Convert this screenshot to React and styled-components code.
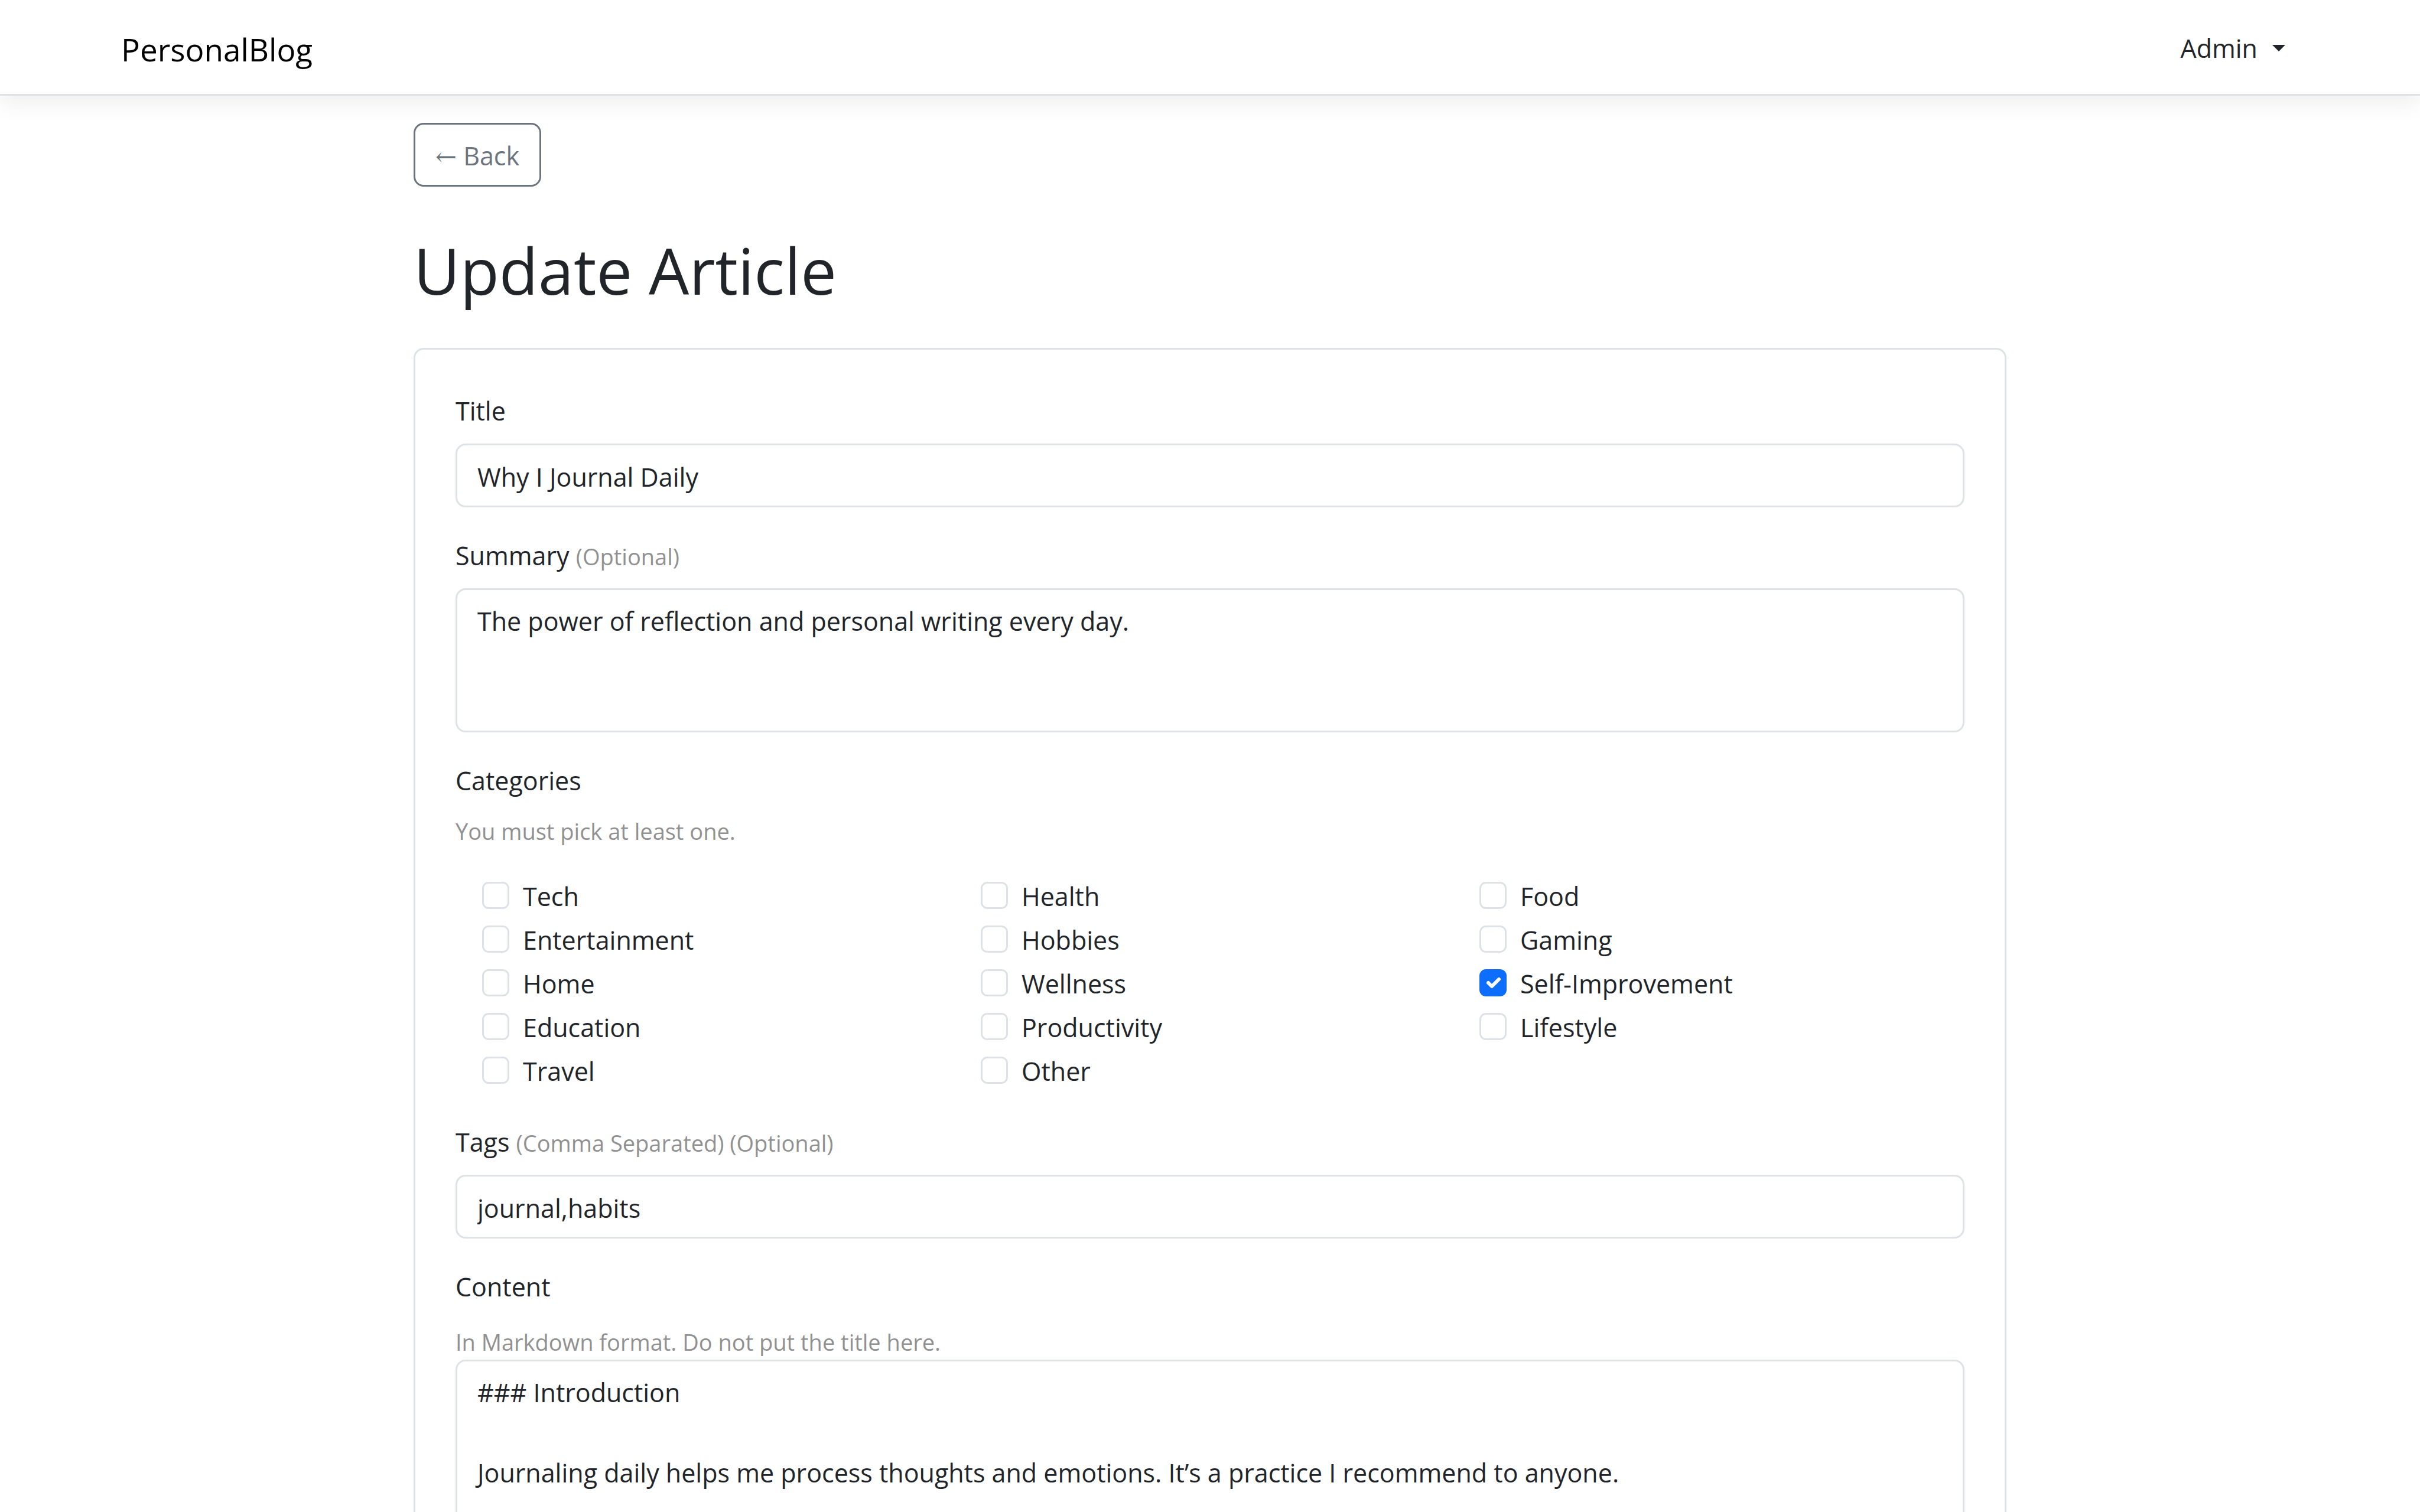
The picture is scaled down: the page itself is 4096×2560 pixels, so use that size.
import React from 'react';
import styled, { createGlobalStyle } from 'styled-components';

const ink = '#212529';
const line = '#dee2e6';
const muted = '#919191';

const GlobalStyle = createGlobalStyle`
  *, *::before, *::after { box-sizing: border-box; }
  html { scrollbar-width: none; }
  body {
    margin: 0;
    background: #fff;
    color: ${ink};
    font-family: 'Open Sans', 'Noto Sans', sans-serif;
    font-size: 43px;
    line-height: 72px;
  }
  input, textarea, button { font: inherit; color: inherit; }
`;

const Navbar = styled.header`
  border-bottom: 3px solid ${line};
  box-shadow: 0 12px 36px rgba(0, 0, 0, 0.07);
`;

const NavInner = styled.nav`
  display: flex;
  align-items: center;
  justify-content: space-between;
  height: 159px;
  max-width: 3754px;
  margin: 0 auto;
  padding: 0 34px;
`;

const Brand = styled.a`
  padding-top: 8px;
  color: #000;
  font-size: 53px;
  text-decoration: none;
`;

const UserMenu = styled.button`
  display: flex;
  align-items: center;
  gap: 25px;
  padding: 4px 23px 0;
  border: 0;
  background: none;
`;

const Caret = styled.span`
  border: 11px solid transparent;
  border-top-color: currentColor;
  border-bottom-width: 0;
`;

const Page = styled.main`
  max-width: 2696px;
  margin: 0 auto;
  padding-top: 46px;
`;

const BackButton = styled.button`
  display: block;
  height: 108px;
  padding: 4px 34px 0;
  border: 3px solid #6c757d;
  border-radius: 17px;
  background: #fff;
  color: #6c757d;
  line-height: 68px;
`;

const Arrow = styled.span`
  font-family: 'DejaVu Serif', serif;
  line-height: 1;
`;

const Heading = styled.h1`
  margin: 73px 0 63px;
  font-size: 108px;
  font-weight: 400;
  line-height: 137px;
`;

const Card = styled.form`
  display: flex;
  flex-direction: column;
  gap: 46px;
  padding: 68px;
  border: 3px solid ${line};
  border-radius: 17px;
`;

const Field = styled.div`
  display: flex;
  flex-direction: column;
`;

const Label = styled.label`
  margin-bottom: 19px;
`;

const Note = styled.span`
  color: ${muted};
  font-size: 38px;
  line-height: 1;
`;

const Hint = styled.p`
  margin: 0;
  padding-top: ${(p) => (p.$spaced ? 0 : 8)}px;
  padding-bottom: ${(p) => (p.$spaced ? 45 : 0)}px;
  color: ${muted};
  font-size: 38px;
  line-height: 60px;
`;

const Group = styled.fieldset`
  min-width: 0;
  margin: 0;
  padding: 0;
  border: 0;
`;

const Legend = styled.legend`
  margin-bottom: 19px;
  padding: 0;
`;

const TextInput = styled.input`
  width: 100%;
  height: 108px;
  padding: 4px 34px 0;
  border: 3px solid ${line};
  border-radius: 17px;
  background: #fff;
  outline: 0;
`;

const TextArea = styled.textarea`
  display: block;
  width: 100%;
  height: ${(p) => p.$height}px;
  padding: 19px 34px 15px;
  border: 3px solid ${line};
  border-radius: 17px;
  background: #fff;
  line-height: 68px;
  outline: 0;
  resize: none;
  overflow: hidden;
`;

const Options = styled.div`
  display: grid;
  grid-template-columns: repeat(3, 1fr);
  margin: 0 -23px 0 45px;
`;

const Option = styled.label`
  display: flex;
  align-items: flex-start;
  gap: 23px;
  height: 74px;
`;

const Box = styled.span`
  display: grid;
  margin-top: 11px;
`;

const Tick = styled.input`
  grid-area: 1 / 1;
  appearance: none;
  width: 46px;
  height: 46px;
  margin: 0;
  border: 3px solid ${line};
  border-radius: 11px;
  background: #fff;

  &:checked {
    border-color: #0d6efd;
    background: #0d6efd;
  }
  & + svg { visibility: hidden; }
  &:checked + svg { visibility: visible; }
`;

const TickMark = styled.svg`
  grid-area: 1 / 1;
  width: 40px;
  height: 40px;
  margin: 3px;
  pointer-events: none;
`;

const categories = [
  'Tech', 'Health', 'Food',
  'Entertainment', 'Hobbies', 'Gaming',
  'Home', 'Wellness', 'Self-Improvement',
  'Education', 'Productivity', 'Lifestyle',
  'Travel', 'Other',
];

const content = `### Introduction

Journaling daily helps me process thoughts and emotions. It’s a practice I recommend to anyone.`;

function Category({ name }) {
  return (
    <Option>
      <Box>
        <Tick type="checkbox" name="categories" value={name} defaultChecked={name === 'Self-Improvement'} />
        <TickMark viewBox="0 0 20 20" aria-hidden="true">
          <path fill="none" stroke="#fff" strokeLinecap="round" strokeLinejoin="round" strokeWidth="3" d="m6 10 3 3 6-6" />
        </TickMark>
      </Box>
      {name}
    </Option>
  );
}

export default function App() {
  return (
    <>
      <GlobalStyle />
      <Navbar>
        <NavInner>
          <Brand href="#">PersonalBlog</Brand>
          <UserMenu type="button" aria-haspopup="menu">
            Admin
            <Caret />
          </UserMenu>
        </NavInner>
      </Navbar>
      <Page>
        <BackButton type="button"><Arrow>←</Arrow> Back</BackButton>
        <Heading>Update Article</Heading>
        <Card>
          <Field>
            <Label htmlFor="title">Title</Label>
            <TextInput id="title" type="text" defaultValue="Why I Journal Daily" />
          </Field>
          <Field>
            <Label htmlFor="summary">Summary <Note>(Optional)</Note></Label>
            <TextArea id="summary" $height={244} defaultValue="The power of reflection and personal writing every day." />
          </Field>
          <Group>
            <Legend>Categories</Legend>
            <Hint $spaced>You must pick at least one.</Hint>
            <Options>
              {categories.map((name) => <Category key={name} name={name} />)}
            </Options>
          </Group>
          <Field>
            <Label htmlFor="tags">Tags <Note>(Comma Separated) (Optional)</Note></Label>
            <TextInput id="tags" type="text" defaultValue="journal,habits" />
          </Field>
          <Field>
            <Label htmlFor="content">Content</Label>
            <Hint id="content-hint">In Markdown format. Do not put the title here.</Hint>
            <TextArea id="content" aria-describedby="content-hint" $height={1400} defaultValue={content} />
          </Field>
        </Card>
      </Page>
    </>
  );
}
